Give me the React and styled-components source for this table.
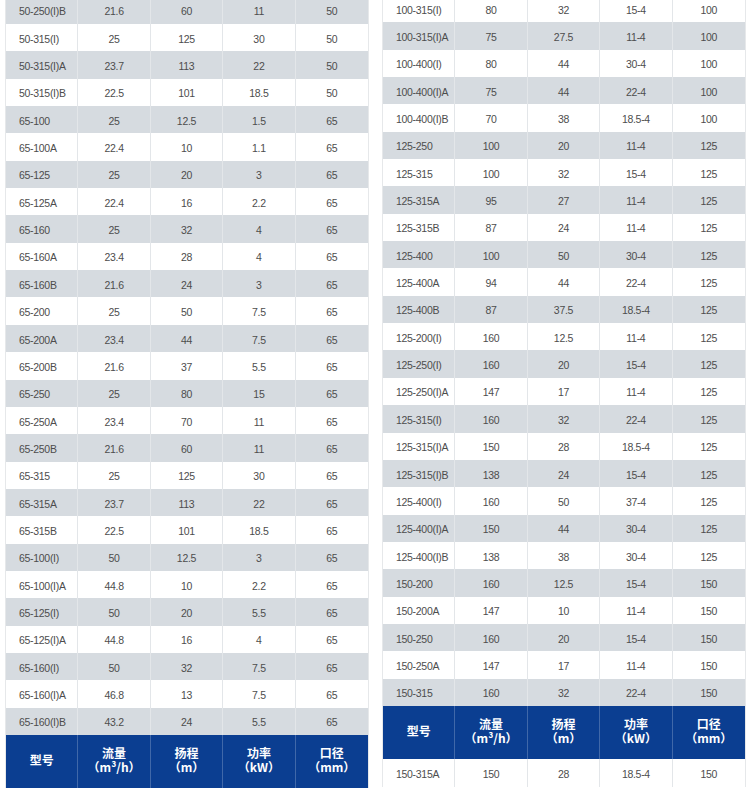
import styled, { createGlobalStyle } from "styled-components";

const GlobalStyle = createGlobalStyle`
  html, body {
    margin: 0;
    padding: 0;
    background: #ffffff;
    overflow: hidden;
  }
  body {
    font-family: "Liberation Sans", Arial, sans-serif;
  }
`;

const leftRows = [
  ["50-250(I)B", "21.6", "60", "11", "50"],
  ["50-315(I)", "25", "125", "30", "50"],
  ["50-315(I)A", "23.7", "113", "22", "50"],
  ["50-315(I)B", "22.5", "101", "18.5", "50"],
  ["65-100", "25", "12.5", "1.5", "65"],
  ["65-100A", "22.4", "10", "1.1", "65"],
  ["65-125", "25", "20", "3", "65"],
  ["65-125A", "22.4", "16", "2.2", "65"],
  ["65-160", "25", "32", "4", "65"],
  ["65-160A", "23.4", "28", "4", "65"],
  ["65-160B", "21.6", "24", "3", "65"],
  ["65-200", "25", "50", "7.5", "65"],
  ["65-200A", "23.4", "44", "7.5", "65"],
  ["65-200B", "21.6", "37", "5.5", "65"],
  ["65-250", "25", "80", "15", "65"],
  ["65-250A", "23.4", "70", "11", "65"],
  ["65-250B", "21.6", "60", "11", "65"],
  ["65-315", "25", "125", "30", "65"],
  ["65-315A", "23.7", "113", "22", "65"],
  ["65-315B", "22.5", "101", "18.5", "65"],
  ["65-100(I)", "50", "12.5", "3", "65"],
  ["65-100(I)A", "44.8", "10", "2.2", "65"],
  ["65-125(I)", "50", "20", "5.5", "65"],
  ["65-125(I)A", "44.8", "16", "4", "65"],
  ["65-160(I)", "50", "32", "7.5", "65"],
  ["65-160(I)A", "46.8", "13", "7.5", "65"],
  ["65-160(I)B", "43.2", "24", "5.5", "65"],
];

const rightRows = [
  ["100-315(I)", "80", "32", "15-4", "100"],
  ["100-315(I)A", "75", "27.5", "11-4", "100"],
  ["100-400(I)", "80", "44", "30-4", "100"],
  ["100-400(I)A", "75", "44", "22-4", "100"],
  ["100-400(I)B", "70", "38", "18.5-4", "100"],
  ["125-250", "100", "20", "11-4", "125"],
  ["125-315", "100", "32", "15-4", "125"],
  ["125-315A", "95", "27", "11-4", "125"],
  ["125-315B", "87", "24", "11-4", "125"],
  ["125-400", "100", "50", "30-4", "125"],
  ["125-400A", "94", "44", "22-4", "125"],
  ["125-400B", "87", "37.5", "18.5-4", "125"],
  ["125-200(I)", "160", "12.5", "11-4", "125"],
  ["125-250(I)", "160", "20", "15-4", "125"],
  ["125-250(I)A", "147", "17", "11-4", "125"],
  ["125-315(I)", "160", "32", "22-4", "125"],
  ["125-315(I)A", "150", "28", "18.5-4", "125"],
  ["125-315(I)B", "138", "24", "15-4", "125"],
  ["125-400(I)", "160", "50", "37-4", "125"],
  ["125-400(I)A", "150", "44", "30-4", "125"],
  ["125-400(I)B", "138", "38", "30-4", "125"],
  ["150-200", "160", "12.5", "15-4", "150"],
  ["150-200A", "147", "10", "11-4", "150"],
  ["150-250", "160", "20", "15-4", "150"],
  ["150-250A", "147", "17", "11-4", "150"],
  ["150-315", "160", "32", "22-4", "150"],
];

const rightTail = [["150-315A", "150", "28", "18.5-4", "150"]];

// one text per header cell, lines split by \n
const headers = [
  "型号",
  "流量\n（m³/h）",
  "扬程\n（m）",
  "功率\n（kW）",
  "口径\n（mm）",
];

export default function App() {
  return (
    <>
      <GlobalStyle />
      <Page>
        <Table $offset={-3.3}>
          {leftRows.map((r, i) => (
            <DataRow key={i} row={r} gray={i % 2 === 0} />
          ))}
          <HeaderRow />
        </Table>
        <Table $offset={-5}>
          {rightRows.map((r, i) => (
            <DataRow key={i} row={r} gray={i % 2 === 1} />
          ))}
          <HeaderRow />
          {rightTail.map((r, i) => (
            <DataRow key={"t" + i} row={r} gray={false} />
          ))}
        </Table>
      </Page>
    </>
  );
}

function DataRow({ row, gray }) {
  return (
    <Row $gray={gray}>
      {row.map((v, j) => (
        <Cell key={j} $first={j === 0}>
          {v.replace(/-/g, "‑")}
        </Cell>
      ))}
    </Row>
  );
}

function HeaderRow() {
  return (
    <Head>
      {headers.map((h, i) => (
        <HeadCell key={i}>
          <HeadText>{h}</HeadText>
        </HeadCell>
      ))}
    </Head>
  );
}

const Page = styled.div`
  display: flex;
  align-items: flex-start;
  gap: 13px;
  padding-left: 5px;
  height: 788px;
  overflow: hidden;
`;

const Table = styled.div`
  width: 362px;
  margin-top: ${({ $offset }) => $offset}px;
  display: flex;
  flex-direction: column;
  border-left: 1px solid #e6e8ea;
  border-right: 1px solid #e6e8ea;
`;

const Row = styled.div`
  display: grid;
  grid-template-columns: repeat(5, 1fr);
  height: 27.35px;
  background: ${({ $gray }) => ($gray ? "#d6dbe0" : "#ffffff")};
`;

const Cell = styled.div`
  display: flex;
  align-items: center;
  justify-content: ${({ $first }) => ($first ? "flex-start" : "center")};
  padding: ${({ $first }) => ($first ? "2px 0 0 13px" : "2px 0 0 0")};
  font-size: 10.5px;
  letter-spacing: -0.3px;
  color: #4d4d4d;
  border-right: 1px solid #e3e6e9;
  white-space: nowrap;
  overflow: hidden;

  &:last-child {
    border-right: none;
  }
`;

const Head = styled.div`
  display: grid;
  grid-template-columns: repeat(5, 1fr);
  height: 53.5px;
  background: #0b3e91;
`;

const HeadCell = styled.div`
  display: flex;
  align-items: center;
  justify-content: center;
  padding-bottom: 3px;
  border-right: 1px solid rgba(255, 255, 255, 0.22);

  &:last-child {
    border-right: none;
  }
`;

const HeadText = styled.div`
  color: #ffffff;
  font-family: "Noto Sans CJK SC", "Liberation Sans", sans-serif;
  font-weight: 700;
  font-size: 12px;
  line-height: 14.5px;
  text-align: center;
  white-space: pre;
`;
